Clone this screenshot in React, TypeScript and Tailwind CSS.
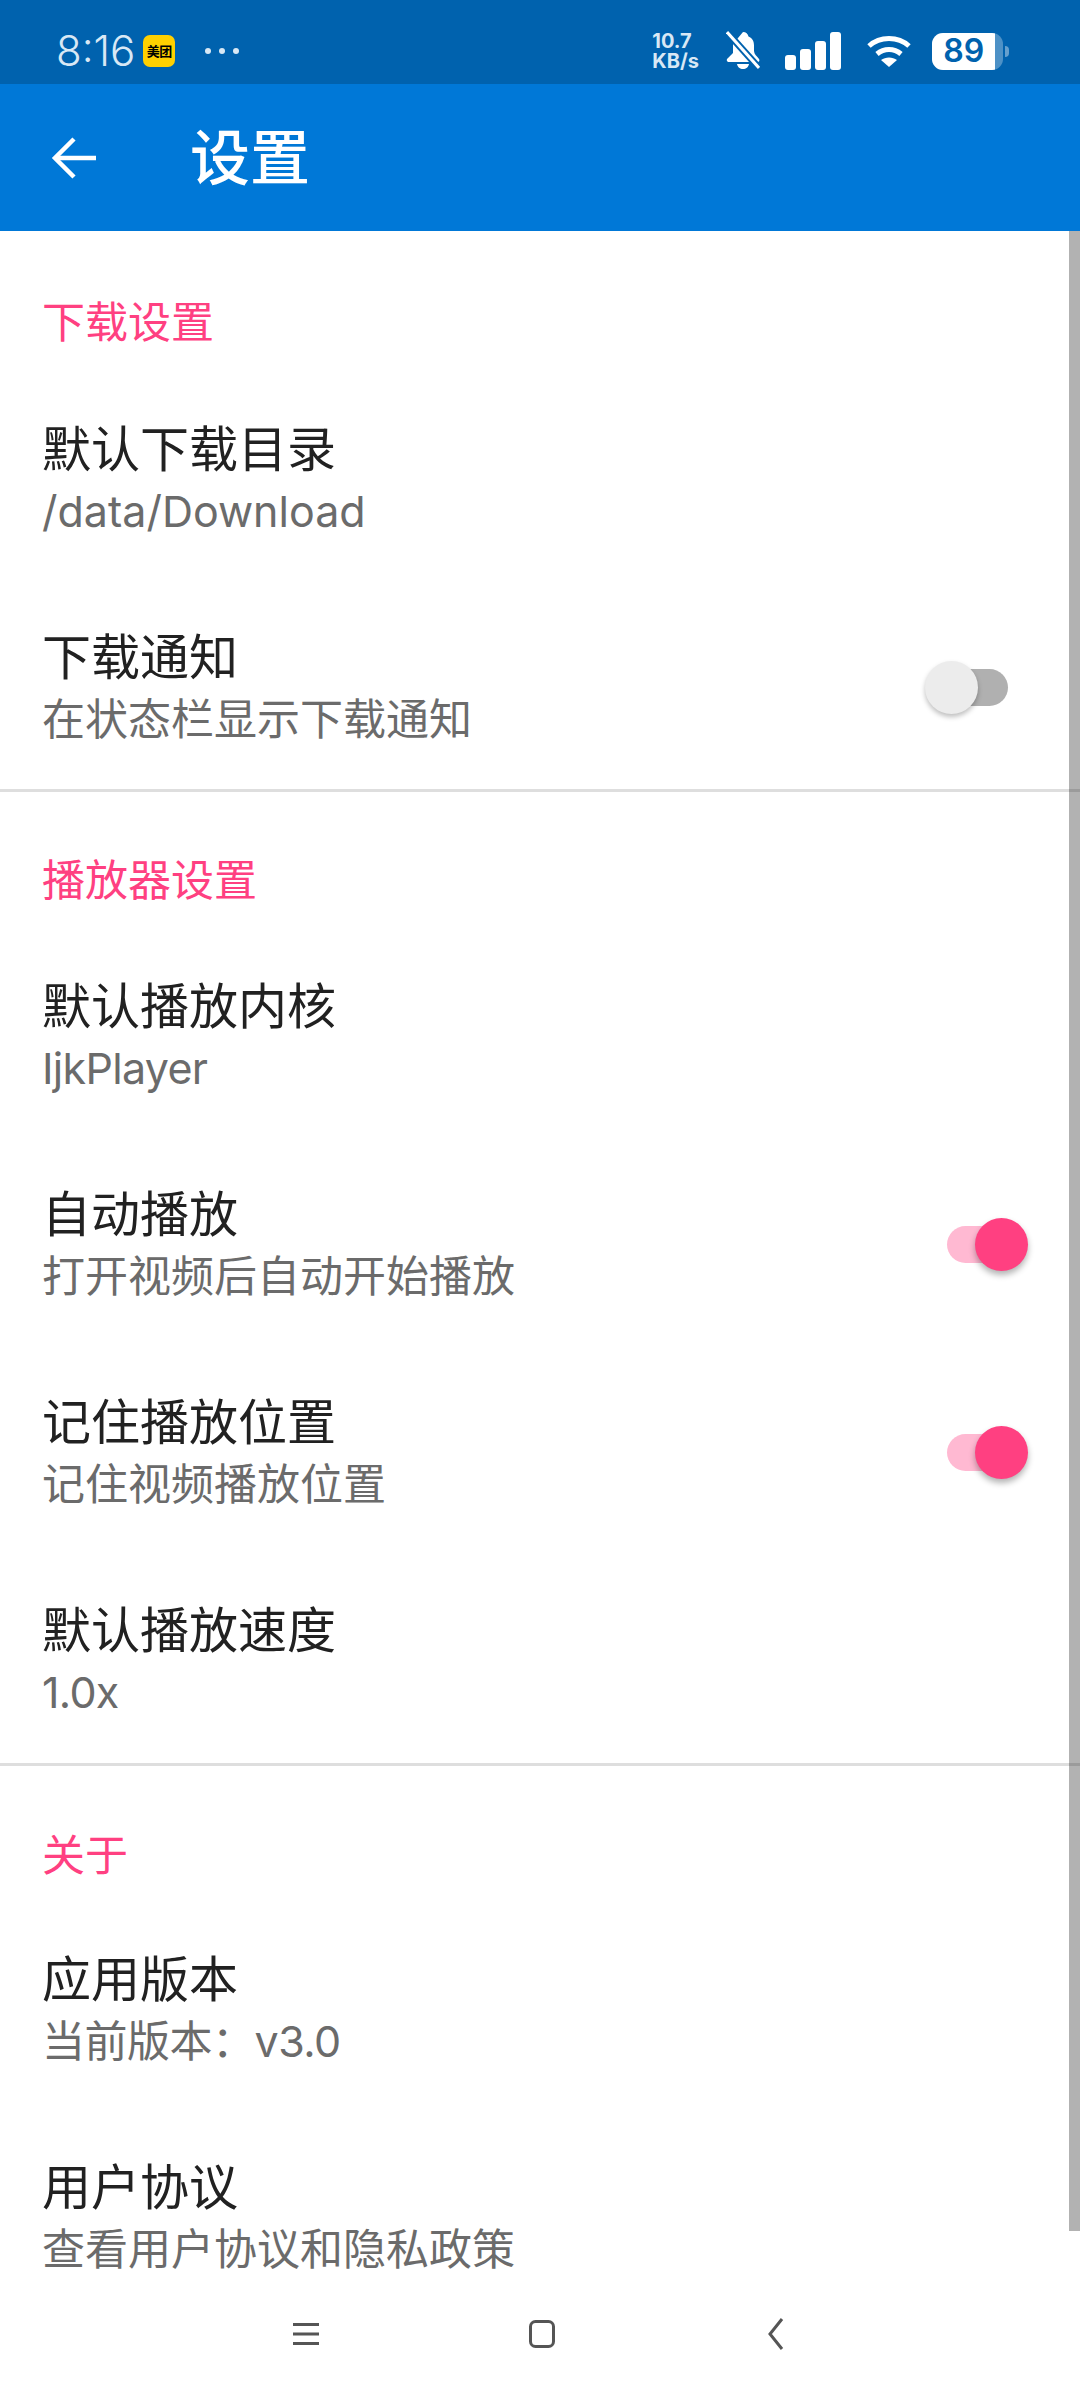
import React from "react"

const cjk = "font-['Inter','Noto_Sans_CJK_SC',sans-serif]"

const SectionTitle = ({ label, className }: { label: string; className: string }) => (
  <div className={`flex items-center pl-[42px] text-[43px] leading-[56px] text-[#ff4081] ${className}`}>{label}</div>
)

const Switch = ({ on }: { on: boolean }) => (
  <div className="relative h-[53px] w-[103px] shrink-0">
    <div
      className={
        on
          ? "absolute left-[22px] top-[8px] h-[37px] w-[72px] rounded-full bg-[#ffb9d2]"
          : "absolute left-[11px] top-[8px] h-[37px] w-[72px] rounded-full bg-[#b0b0b0]"
      }
    />
    <div
      className={
        on
          ? "absolute left-[50px] top-0 size-[53px] rounded-full bg-[#ff4081] shadow-[0_4px_6px_rgba(0,0,0,0.3)]"
          : "absolute left-0 top-0 size-[53px] rounded-full bg-[#ececec] shadow-[0_3px_5px_rgba(0,0,0,0.25)]"
      }
    />
  </div>
)

const Row = ({ title, sub, on, subClass = "" }: { title: string; sub: string; on?: boolean; subClass?: string }) => (
  <div className="flex h-[208px] items-center justify-between pl-[42px] pr-[52px]">
    <div className="flex flex-col pt-[2px]">
      <div className="text-[49px] leading-[61px] text-[#212121]">{title}</div>
      <div className={`text-[43px] leading-[62px] text-[#6b6b6b] ${subClass}`}>{sub}</div>
    </div>
    {on !== undefined && <Switch on={on} />}
  </div>
)

const StatusBar = () => (
  <div className="flex h-[84px] shrink-0 items-center bg-[#0062ae] pt-[18px] text-[#d8e8f5]">
    <div className="ml-[56px] text-[42px] font-light leading-none">8:16</div>
    <div className="ml-[8px] flex size-[32px] items-center justify-center rounded-[7px] bg-[#ffd000] text-[13px] font-bold leading-none tracking-[-0.5px] text-black">
      美团
    </div>
    <svg className="ml-[29px]" width="36" height="8" viewBox="0 0 36 8" fill="currentColor">
      <circle cx="4" cy="4" r="3" />
      <circle cx="18" cy="4" r="3" />
      <circle cx="32" cy="4" r="3" />
    </svg>
    <div className="ml-[412px] flex w-[50px] flex-col items-start text-[20px] font-bold leading-[20px]">
      <span>10.7</span>
      <span>KB/s</span>
    </div>
    <svg className="ml-[24px]" width="34" height="40" viewBox="0 0 34 40" fill="white">
      <path d="M17 1c3 0 5 2 5.500 4.500 4 1.500 5.500 5 5.500 9v5.500c0 3 3 5.500 5 8 1 1.500 0 3-1 3H3c-2 0-3-2-1.500-3.500L7 22V13z" />
      <path d="M11 33h12c-.5 3-3 5-6 5s-5.500-2-6-5z" />
      <path d="M-1 -1 L34 38" stroke="#0062ae" strokeWidth="7" />
      <path d="M1 1 L33 37" stroke="white" strokeWidth="3" />
    </svg>
    <div className="ml-[25px] flex h-[38px] items-end gap-[4px]">
      <div className="h-[15px] w-[11px] rounded-[3px] bg-white" />
      <div className="h-[21px] w-[11px] rounded-[3px] bg-white" />
      <div className="h-[29px] w-[11px] rounded-[3px] bg-white" />
      <div className="h-[38px] w-[11px] rounded-[3px] bg-white" />
    </div>
    <svg className="ml-[25px]" width="46" height="34" viewBox="0 0 46 34" fill="none" stroke="white" strokeWidth="5">
      <path d="M3 12c11-10 29-10 40 0" />
      <path d="M11 20c7-6 17-6 24 0" />
      <path d="M23 33l-8-7c4.500-3.500 11.500-3.500 16 0z" fill="white" stroke="none" />
    </svg>
    <div className="ml-[20px] flex items-center">
      <div className="flex h-[37px] w-[71px] overflow-hidden rounded-[11px] bg-white/30">
        <div className="flex h-full w-[63px] items-center justify-center bg-white text-[32px] font-semibold leading-none text-[#0062ae]">
          89
        </div>
      </div>
      <div className="ml-[2px] h-[11px] w-[4px] rounded-r-full bg-white/40" />
    </div>
  </div>
)

const AppBar = () => (
  <div className="flex h-[147px] shrink-0 items-center bg-[#0078d7] pl-[50px] text-white">
    <svg width="48" height="48" viewBox="0 0 48 48" fill="none" stroke="white" strokeWidth="4.500">
      <path d="M46 24H6" />
      <path d="M24 5L5 24l19 19" />
    </svg>
    <div className="ml-[92px] text-[60px] font-medium leading-none">设置</div>
  </div>
)

const NavBar = () => (
  <div className="absolute bottom-0 left-0 flex h-[115px] w-full items-center bg-white pb-[18px] text-[#555]">
    <svg className="ml-[292px]" width="28" height="24" viewBox="0 0 28 24" fill="currentColor">
      <rect x="1" y="1" width="26" height="3" />
      <rect x="1" y="10.500" width="26" height="3" />
      <rect x="1" y="20" width="26" height="3" />
    </svg>
    <svg className="ml-[209px]" width="26" height="28" viewBox="0 0 26 28" fill="none" stroke="currentColor" strokeWidth="3">
      <rect x="1.500" y="1.500" width="23" height="25" rx="5" />
    </svg>
    <svg className="ml-[213px]" width="16" height="34" viewBox="0 0 16 34" fill="none" stroke="currentColor" strokeWidth="3">
      <path d="M14 2L2 17l12 15" />
    </svg>
  </div>
)

export default function App() {
  return (
    <div className={`flex h-[2400px] w-[1080px] flex-col overflow-hidden bg-white ${cjk}`}>
      <StatusBar />
      <AppBar />
      <div className="relative flex-1 overflow-hidden">
        <SectionTitle label="下载设置" className="h-[144px] pt-[38px]" />
        <Row title="默认下载目录" sub="/data/Download" />
        <Row title="下载通知" sub="在状态栏显示下载通知" on={false} />
        <div className="-mt-[2px] h-[3px] bg-[#dedede]" />
        <SectionTitle label="播放器设置" className="h-[140px] pt-[36px]" />
        <Row title="默认播放内核" sub="IjkPlayer" subClass="tracking-[-0.7px]" />
        <Row title="自动播放" sub="打开视频后自动开始播放" on />
        <Row title="记住播放位置" sub="记住视频播放位置" on />
        <Row title="默认播放速度" sub="1.0x" subClass="tracking-[-0.7px]" />
        <div className="-mt-[1px] h-[3px] bg-[#dedede]" />
        <SectionTitle label="关于" className="h-[139px] pt-[38px]" />
        <Row title="应用版本" sub="当前版本：v3.0" subClass="tracking-[-0.5px]" />
        <Row title="用户协议" sub="查看用户协议和隐私政策" />
        <div className="absolute right-0 top-0 h-[2000px] w-[11px] bg-black/30" />
        <NavBar />
      </div>
    </div>
  )
}
